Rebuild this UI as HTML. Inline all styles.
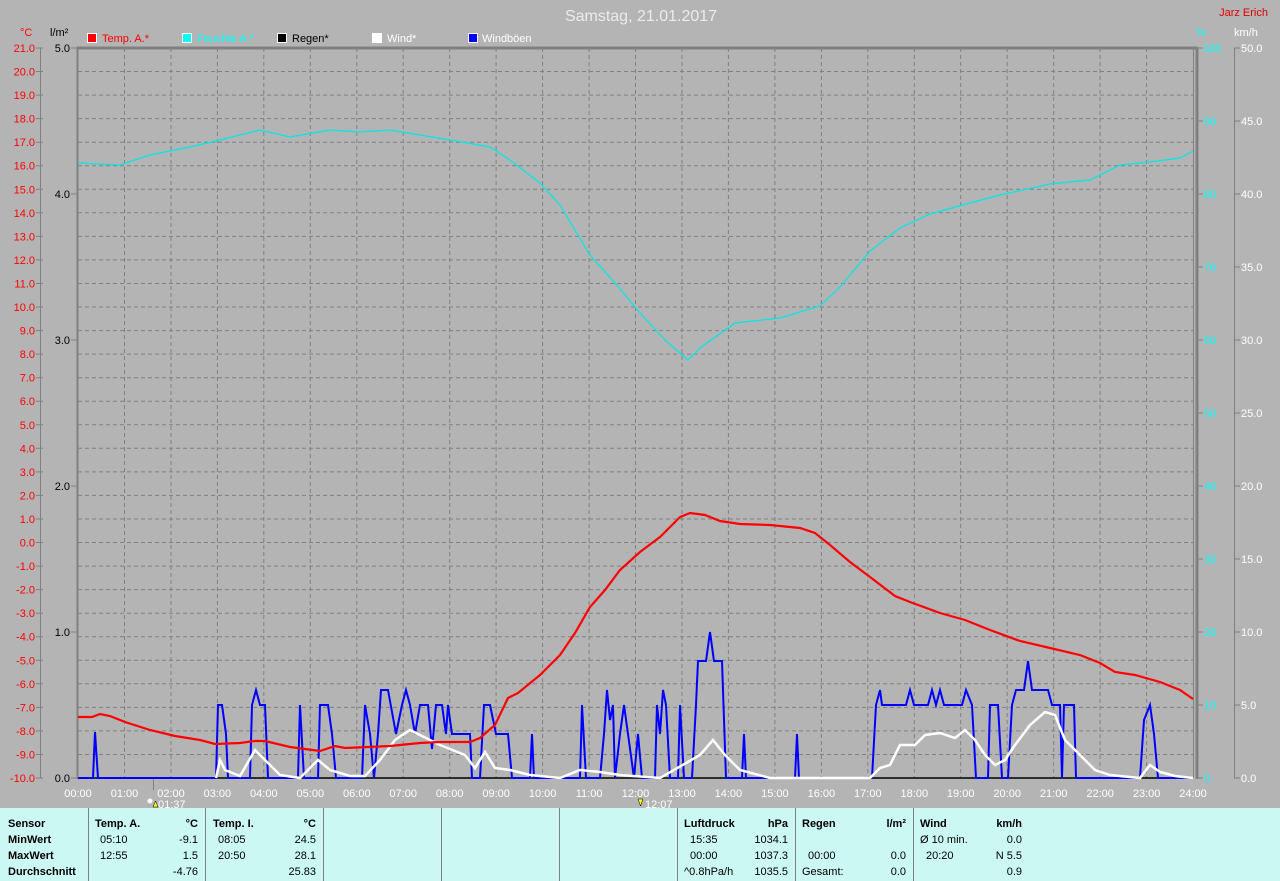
<!DOCTYPE html>
<html><head><meta charset="utf-8"><style>
html,body{margin:0;padding:0;background:#b4b4b4;}
svg{display:block;font-family:"Liberation Sans",sans-serif;}
</style></head><body>
<svg width="1280" height="881" viewBox="0 0 1280 881" xmlns="http://www.w3.org/2000/svg">
<rect width="1280" height="881" fill="#b4b4b4"/>
<text x="641" y="21" font-size="16" fill="#ececec" text-anchor="middle">Samstag, 21.01.2017</text>
<text x="1268" y="16" font-size="11" fill="#e00000" text-anchor="end">Jarz Erich</text>
<!-- legend -->
<g font-size="11">
<rect x="87.5" y="33.5" width="9" height="9" fill="#ff0000" stroke="#fff"/><text x="102" y="42" fill="#ff0000">Temp. A.*</text>
<rect x="182.5" y="33.5" width="9" height="9" fill="#00ffff" stroke="#fff"/><text x="197" y="42" fill="#00ffff">Feuchte A.*</text>
<rect x="277.5" y="33.5" width="9" height="9" fill="#000" stroke="#fff"/><text x="292" y="42" fill="#000">Regen*</text>
<rect x="372.5" y="33.5" width="9" height="9" fill="#fff" stroke="#fff"/><text x="387" y="42" fill="#fff">Wind*</text>
<rect x="468.5" y="33.5" width="9" height="9" fill="#0000ff" stroke="#fff"/><text x="482" y="42" fill="#fff">Windböen</text>
</g>
<text x="20" y="36" font-size="11" fill="#ff0000">°C</text>
<text x="50" y="36" font-size="11" fill="#000">l/m²</text>
<text x="1196" y="36" font-size="11" fill="#00ffff">%</text>
<text x="1234" y="36" font-size="11" fill="#fff">km/h</text>
<!-- grid -->
<g stroke="#808080" stroke-width="1" stroke-dasharray="4,3">
<path d="M78 71.5H1193M78 95.1H1193M78 118.6H1193M78 142.2H1193M78 165.7H1193M78 189.3H1193M78 212.8H1193M78 236.4H1193M78 259.9H1193M78 283.5H1193M78 307H1193M78 330.6H1193M78 354.1H1193M78 377.7H1193M78 401.2H1193M78 424.8H1193M78 448.3H1193M78 471.9H1193M78 495.4H1193M78 519H1193M78 542.5H1193M78 566.1H1193M78 589.6H1193M78 613.2H1193M78 636.7H1193M78 660.3H1193M78 683.8H1193M78 707.4H1193M78 730.9H1193M78 754.5H1193"/>
<path d="M124.5 48V778M171 48V778M217.4 48V778M263.8 48V778M310.3 48V778M356.8 48V778M403.2 48V778M449.7 48V778M496.1 48V778M542.6 48V778M589.1 48V778M635.5 48V778M682 48V778M728.4 48V778M774.9 48V778M821.4 48V778M867.8 48V778M914.3 48V778M960.7 48V778M1007.2 48V778M1053.7 48V778M1100.1 48V778M1146.6 48V778"/>
</g>
<!-- frame -->
<path d="M77 48H1197" stroke="#808080" stroke-width="3"/>
<path d="M77.5 47V779" stroke="#808080" stroke-width="2"/>
<path d="M1197 47V779" stroke="#808080" stroke-width="3"/>
<path d="M1193.5 48V778" stroke="#808080" stroke-width="1"/>
<path d="M40.5 48V778M1234.5 48V778" stroke="#808080"/>
<!-- left temp axis -->
<g font-size="11" fill="#ff0000" text-anchor="end">
<text x="35" y="52">21.0</text><text x="35" y="75.5">20.0</text><text x="35" y="99">19.0</text><text x="35" y="122.6">18.0</text><text x="35" y="146.2">17.0</text><text x="35" y="169.7">16.0</text><text x="35" y="193.3">15.0</text><text x="35" y="216.8">14.0</text><text x="35" y="240.4">13.0</text><text x="35" y="263.9">12.0</text><text x="35" y="287.5">11.0</text><text x="35" y="311">10.0</text><text x="35" y="334.6">9.0</text><text x="35" y="358.1">8.0</text><text x="35" y="381.7">7.0</text><text x="35" y="405.2">6.0</text><text x="35" y="428.8">5.0</text><text x="35" y="452.3">4.0</text><text x="35" y="475.9">3.0</text><text x="35" y="499.4">2.0</text><text x="35" y="523">1.0</text><text x="35" y="546.5">0.0</text><text x="35" y="570.1">-1.0</text><text x="35" y="593.6">-2.0</text><text x="35" y="617.2">-3.0</text><text x="35" y="640.7">-4.0</text><text x="35" y="664.3">-5.0</text><text x="35" y="687.8">-6.0</text><text x="35" y="711.4">-7.0</text><text x="35" y="734.9">-8.0</text><text x="35" y="758.5">-9.0</text><text x="35" y="782">-10.0</text>
</g>
<g stroke="#808080"><path d="M36 48H43M36 71.5H43M36 95.1H43M36 118.6H43M36 142.2H43M36 165.7H43M36 189.3H43M36 212.8H43M36 236.4H43M36 259.9H43M36 283.5H43M36 307H43M36 330.6H43M36 354.1H43M36 377.7H43M36 401.2H43M36 424.8H43M36 448.3H43M36 471.9H43M36 495.4H43M36 519H43M36 542.5H43M36 566.1H43M36 589.6H43M36 613.2H43M36 636.7H43M36 660.3H43M36 683.8H43M36 707.4H43M36 730.9H43M36 754.5H43M36 778H43"/>
<path d="M71 48H77M71 194H77M71 340H77M71 486H77M71 632H77M71 778H77"/>
<path d="M1198 48H1203M1198 121H1203M1198 194H1203M1198 267H1203M1198 340H1203M1198 413H1203M1198 486H1203M1198 559H1203M1198 632H1203M1198 705H1203M1198 778H1203"/>
<path d="M1234 48H1240M1234 121H1240M1234 194H1240M1234 267H1240M1234 340H1240M1234 413H1240M1234 486H1240M1234 559H1240M1234 632H1240M1234 705H1240M1234 778H1240"/>
<path d="M153.5 779V790"/></g>
<g font-size="11" fill="#000" text-anchor="end">
<text x="70" y="52">5.0</text><text x="70" y="198">4.0</text><text x="70" y="344">3.0</text><text x="70" y="490">2.0</text><text x="70" y="636">1.0</text><text x="70" y="782">0.0</text>
</g>
<g font-size="11" fill="#00ffff">
<text x="1203" y="52">100</text><text x="1204" y="125">90</text><text x="1204" y="198">80</text><text x="1204" y="271">70</text><text x="1204" y="344">60</text><text x="1204" y="417">50</text><text x="1204" y="490">40</text><text x="1204" y="563">30</text><text x="1204" y="636">20</text><text x="1204" y="709">10</text><text x="1204" y="782">0</text>
</g>
<g font-size="11" fill="#fff">
<text x="1241" y="52">50.0</text><text x="1241" y="125">45.0</text><text x="1241" y="198">40.0</text><text x="1241" y="271">35.0</text><text x="1241" y="344">30.0</text><text x="1241" y="417">25.0</text><text x="1241" y="490">20.0</text><text x="1241" y="563">15.0</text><text x="1241" y="636">10.0</text><text x="1241" y="709">5.0</text><text x="1241" y="782">0.0</text>
</g>
<!-- x labels -->
<g font-size="11" fill="#fff" text-anchor="middle">
<text x="78" y="797">00:00</text><text x="124.5" y="797">01:00</text><text x="171" y="797">02:00</text><text x="217.4" y="797">03:00</text><text x="263.8" y="797">04:00</text><text x="310.3" y="797">05:00</text><text x="356.8" y="797">06:00</text><text x="403.2" y="797">07:00</text><text x="449.7" y="797">08:00</text><text x="496.1" y="797">09:00</text><text x="542.6" y="797">10:00</text><text x="589.1" y="797">11:00</text><text x="635.5" y="797">12:00</text><text x="682" y="797">13:00</text><text x="728.4" y="797">14:00</text><text x="774.9" y="797">15:00</text><text x="821.4" y="797">16:00</text><text x="867.8" y="797">17:00</text><text x="914.3" y="797">18:00</text><text x="960.7" y="797">19:00</text><text x="1007.2" y="797">20:00</text><text x="1053.7" y="797">21:00</text><text x="1100.1" y="797">22:00</text><text x="1146.6" y="797">23:00</text><text x="1193" y="797">24:00</text>
</g>
<circle cx="150" cy="801" r="2.5" fill="#fff"/><path d="M153 807L155.5 801L158 807Z" fill="#ffff00" stroke="#000" stroke-width="0.5"/>
<text x="158" y="808" font-size="11" fill="#fff">01:37</text>
<path d="M638 799L643 799L640.5 806Z" fill="#ffff00" stroke="#000" stroke-width="0.5"/>
<text x="645" y="808" font-size="11" fill="#fff">12:07</text>
<!-- data -->
<path d="M78 778H1193" stroke="#000" stroke-width="1.5"/>
<polyline fill="none" stroke="#00e8e8" stroke-width="1.2" points="78,163 120,165 150,155 190,147 220,140 260,130 290,137 330,130 360,132 390,130 420,135 450,140 490,147 510,160 540,183 560,205 590,255 615,283 640,313 665,340 688,360 700,348 735,323 780,318 820,306 840,287 870,251 900,228 930,214 970,203 1000,195 1050,184 1090,180 1120,165 1150,162 1180,158 1193,151"/>
<polyline fill="none" stroke="#0000ff" stroke-width="2" points="78,778 93,778 95,732 98,778 216,778 218,705 222,705 226,734 228,778 250,778 252,705 256,690 260,705 265,705 268,778 298,778 300,705 304,778 318,778 320,705 328,705 332,734 336,778 362,778 365,705 370,734 374,778 378,734 381,690 388,690 396,734 402,705 406,690 410,705 415,734 420,705 428,705 432,749 436,705 442,705 446,734 448,705 452,734 470,734 472,778 480,778 484,705 490,705 496,734 508,734 512,778 530,778 532,734 534,778 580,778 582,705 586,778 600,778 604,734 607,690 610,720 613,705 615,778 620,734 624,705 628,734 634,778 638,734 642,778 655,778 657,705 660,734 663,690 666,705 670,778 678,778 680,705 684,778 692,778 696,705 698,661 706,661 710,632 714,661 722,661 726,778 742,778 744,734 746,778 795,778 797,734 799,778 872,778 876,705 880,690 882,705 906,705 910,690 914,705 928,705 932,690 936,705 940,690 944,705 962,705 966,690 972,705 976,778 988,778 990,705 998,705 1002,778 1008,778 1012,705 1016,690 1024,690 1028,661 1032,690 1048,690 1052,705 1060,705 1062,778 1064,705 1074,705 1076,778 1140,778 1144,720 1150,705 1154,734 1158,778 1193,778"/>
<polyline fill="none" stroke="#fff" stroke-width="2.5" points="216,778 220,760 225,770 240,776 255,750 265,760 280,775 300,778 318,760 330,770 350,776 365,776 380,760 395,740 410,730 420,735 440,745 465,755 475,768 485,752 495,768 510,770 530,775 560,778 580,770 600,772 620,775 660,778 700,755 713,740 725,755 740,770 770,778 870,778 880,768 890,765 900,745 915,745 925,735 940,733 955,738 965,730 975,740 985,755 995,765 1005,760 1015,745 1030,725 1045,712 1055,715 1065,740 1080,755 1095,770 1110,775 1140,778 1150,765 1160,772 1175,776 1193,778"/>
<polyline fill="none" stroke="#ff0000" stroke-width="2.2" points="78,717 92,717 100,714 110,716 125,722 150,730 175,736 200,740 215,744 240,743 255,741 265,741 290,747 320,751 335,746 345,748 390,746 420,743 440,742 470,742 480,738 495,725 508,698 518,693 540,675 560,655 575,633 590,607 605,590 620,570 640,552 660,537 680,517 690,513 705,515 720,521 740,524 770,525 800,528 815,533 830,545 850,562 870,577 895,596 910,602 940,613 965,620 990,630 1020,641 1050,648 1080,655 1100,663 1115,672 1135,675 1160,682 1180,690 1193,699"/>
<!-- table -->
<rect x="0" y="808" width="1280" height="73" fill="#ccf8f4"/>
<path d="M88.5 808V881M205.5 808V881M323.5 808V881M441.5 808V881M559.5 808V881M677.5 808V881M795.5 808V881M913.5 808V881" stroke="#808080"/>
<g font-size="11" fill="#000">
<g font-weight="bold"><text x="8" y="827">Sensor</text><text x="8" y="843">MinWert</text><text x="8" y="859">MaxWert</text><text x="8" y="875">Durchschnitt</text>
<text x="95" y="827">Temp. A.</text><text x="198" y="827" text-anchor="end">°C</text>
<text x="213" y="827">Temp. I.</text><text x="316" y="827" text-anchor="end">°C</text>
<text x="684" y="827">Luftdruck</text><text x="788" y="827" text-anchor="end">hPa</text>
<text x="802" y="827">Regen</text><text x="906" y="827" text-anchor="end">l/m²</text>
<text x="920" y="827">Wind</text><text x="1022" y="827" text-anchor="end">km/h</text></g>
<text x="100" y="843">05:10</text><text x="198" y="843" text-anchor="end">-9.1</text>
<text x="100" y="859">12:55</text><text x="198" y="859" text-anchor="end">1.5</text>
<text x="198" y="875" text-anchor="end">-4.76</text>
<text x="218" y="843">08:05</text><text x="316" y="843" text-anchor="end">24.5</text>
<text x="218" y="859">20:50</text><text x="316" y="859" text-anchor="end">28.1</text>
<text x="316" y="875" text-anchor="end">25.83</text>
<text x="690" y="843">15:35</text><text x="788" y="843" text-anchor="end">1034.1</text>
<text x="690" y="859">00:00</text><text x="788" y="859" text-anchor="end">1037.3</text>
<text x="684" y="875">^0.8hPa/h</text><text x="788" y="875" text-anchor="end">1035.5</text>
<text x="808" y="859">00:00</text><text x="906" y="859" text-anchor="end">0.0</text>
<text x="802" y="875">Gesamt:</text><text x="906" y="875" text-anchor="end">0.0</text>
<text x="920" y="843">Ø 10 min.</text><text x="1022" y="843" text-anchor="end">0.0</text>
<text x="926" y="859">20:20</text><text x="1022" y="859" text-anchor="end">N 5.5</text>
<text x="1022" y="875" text-anchor="end">0.9</text>
</g>
</svg>
</body></html>
